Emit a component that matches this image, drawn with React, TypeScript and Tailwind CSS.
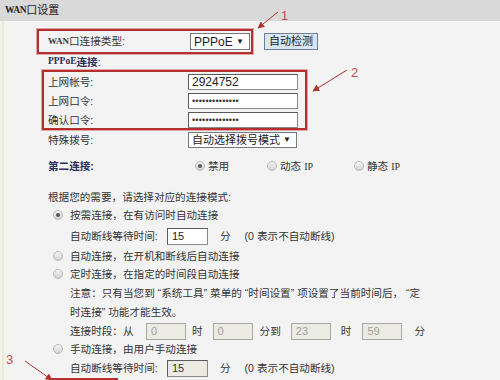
import React from "react";

const RED = "#b3302f";

function Radio({ checked }: { checked?: boolean }) {
  return (
    <span className="inline-flex w-[10px] h-[10px] shrink-0 rounded-full border border-[#b8b8b8] bg-linear-to-b from-[#f6f6f6] to-[#d2d2d2] items-center justify-center">
      {checked && <span className="w-[4px] h-[4px] rounded-full bg-[#555]" />}
    </span>
  );
}

function TextBox({ children, dots }: { children?: React.ReactNode; dots?: boolean }) {
  return (
    <div className="w-[110px] h-[16px] bg-white border border-[#8a8a8a] border-t-[#5a5a5a] border-l-[#5a5a5a] pl-[3px] flex items-center font-['Liberation_Sans',sans-serif] text-[12px] text-[#222] leading-none">
      {dots ? <span className="text-[9px] tracking-[0.2px] text-[#333]">••••••••••••••</span> : children}
    </div>
  );
}

function SmallBox({ value, disabled }: { value: string; disabled?: boolean }) {
  return (
    <div
      className={
        disabled
          ? "w-[40px] h-[17px] bg-[#ebebe4] border border-[#a8a8a8] pl-[4px] flex items-center font-['Liberation_Sans',sans-serif] text-[11px] text-[#a0a0a0] leading-none"
          : "w-[41px] h-[17px] bg-white border border-[#8a8a8a] border-t-[#5a5a5a] border-l-[#5a5a5a] pl-[4px] flex items-center font-['Liberation_Sans',sans-serif] text-[11px] text-[#222] leading-none"
      }
    >
      {value}
    </div>
  );
}

export default function App() {
  return (
    <div className="relative w-[500px] h-[380px] overflow-hidden bg-[#f3f3f3] font-['Liberation_Sans','Noto_Sans_CJK_SC',sans-serif] text-[10.6px] text-[#333] leading-none">
      {/* header */}
      <div className="h-[21px] bg-[#d9d9d9] flex items-center pl-[5px] text-[11px] text-[#222]">
        <span className="font-['Liberation_Serif',serif] font-bold text-[9.5px] tracking-[-0.3px]">WAN</span>
        <span>口设置</span>
      </div>

      {/* content */}
      <div className="ml-[2px] border-l-2 border-[#f1e7c9] h-[359px] pt-[8px]">
        {/* row 1 */}
        <div className="flex items-center">
          <div className="ml-[33px] w-[216px] h-[25px] border-2 border-[#b3302f] shadow-[0_0_0_1px_#e2a4a4] flex items-center pl-[9px]">
            <div className="w-[142px] flex items-center">
              <span className="font-['Liberation_Serif',serif] font-bold text-[9px]">WAN</span>
              <span>口连接类型:</span>
            </div>
            <div className="w-[60px] h-[17px] bg-white border border-[#7a7a7a] flex items-center justify-between pl-[3px] pr-[5px] font-['Liberation_Sans',sans-serif] text-[12px] text-[#222]">
              <span>PPPoE</span>
              <span className="text-[8px]">▼</span>
            </div>
          </div>
          <div className="ml-[11px] w-[54px] h-[17px] bg-[#d8e5f3] border border-[#6f7f99] flex items-center justify-center text-[11px] text-[#222]">
            自动检测
          </div>
        </div>

        {/* PPPoE连接 */}
        <div className="h-[16px] pl-[44px] flex items-center text-[#2c2c5e] font-bold">
          <span className="font-['Liberation_Serif',serif] text-[9.5px]">PPPoE</span>
          <span>连接</span>
          <span className="font-normal">:</span>
        </div>

        {/* box 2 */}
        <div className="ml-[38px] w-[265px] border-2 border-[#b3302f] shadow-[0_0_0_1px_#e2a4a4] pl-[4px] pt-[2px] flex flex-col gap-[3px]">
          <div className="h-[16px] flex items-center">
            <div className="w-[140px]">上网帐号:</div>
            <TextBox>2924752</TextBox>
          </div>
          <div className="h-[16px] flex items-center">
            <div className="w-[140px]">上网口令:</div>
            <TextBox dots />
          </div>
          <div className="h-[16px] flex items-center">
            <div className="w-[140px]">确认口令:</div>
            <TextBox dots />
          </div>
        </div>

        {/* 特殊拨号 */}
        <div className="mt-[2px] h-[16px] pl-[44px] flex items-center">
          <div className="w-[140px]">特殊拨号:</div>
          <div className="w-[109px] h-[16px] bg-white border border-[#7a7a7a] flex items-center justify-between pl-[3px] pr-[5px] text-[11px] text-[#222]">
            <span>自动选择拨号模式</span>
            <span className="text-[8px]">▼</span>
          </div>
        </div>

        {/* 第二连接 */}
        <div className="mt-[8px] h-[20px] pl-[44px] flex items-center">
          <div className="w-[147px] text-[#2c2c5e] font-bold">第二连接:</div>
          <div className="w-[72px] flex items-center">
            <Radio checked />
            <span className="ml-[3px]">禁用</span>
          </div>
          <div className="w-[87px] flex items-center">
            <Radio />
            <span className="ml-[3px]">动态 <span className="font-['Liberation_Serif',serif] text-[10px]">IP</span></span>
          </div>
          <div className="flex items-center">
            <Radio />
            <span className="ml-[3px]">静态 <span className="font-['Liberation_Serif',serif] text-[10px]">IP</span></span>
          </div>
        </div>

        {/* modes */}
        <div className="mt-[12px] h-[18px] pl-[44px] flex items-center">根据您的需要，请选择对应的连接模式:</div>

        <div className="h-[18px] pl-[49px] flex items-center">
          <Radio checked />
          <span className="ml-[7px]">按需连接，在有访问时自动连接</span>
        </div>
        <div className="mt-[2px] h-[20px] pl-[66px] flex items-center">
          <div className="w-[97px]">自动断线等待时间:</div>
          <SmallBox value="15" />
          <span className="ml-[12px]">分</span>
          <span className="ml-[14px]">(0 表示不自动断线)</span>
        </div>
        <div className="mt-[1px] h-[18px] pl-[49px] flex items-center">
          <Radio />
          <span className="ml-[7px]">自动连接，在开机和断线后自动连接</span>
        </div>
        <div className="h-[18px] pl-[49px] flex items-center">
          <Radio />
          <span className="ml-[7px]">定时连接，在指定的时间段自动连接</span>
        </div>
        <div className="mt-[1px] pl-[66px] leading-[19px]">
          <div>注意：只有当您到 “系统工具” 菜单的 “时间设置” 项设置了当前时间后， “定</div>
          <div>时连接” 功能才能生效。</div>
        </div>
        <div className="h-[19px] pl-[66px] flex items-center">
          <div className="w-[76px]">连接时段：从</div>
          <SmallBox value="0" disabled />
          <span className="ml-[6px]">时</span>
          <span className="ml-[10px]"><SmallBox value="0" disabled /></span>
          <span className="ml-[7px]">分到</span>
          <span className="ml-[10px]"><SmallBox value="23" disabled /></span>
          <span className="ml-[10px]">时</span>
          <span className="ml-[11px]"><SmallBox value="59" disabled /></span>
          <span className="ml-[12px]">分</span>
        </div>
        <div className="h-[16px] pl-[49px] flex items-center">
          <Radio />
          <span className="ml-[7px]">手动连接，由用户手动连接</span>
        </div>
        <div className="mt-[2px] h-[19px] pl-[66px] flex items-center">
          <div className="w-[97px]">自动断线等待时间:</div>
          <div className="w-[41px] h-[17px] bg-[#ebebe4] border border-[#8a8a8a] border-t-[#5a5a5a] border-l-[#5a5a5a] pl-[4px] flex items-center font-['Liberation_Sans',sans-serif] text-[11px] text-[#333]">15</div>
          <span className="ml-[12px]">分</span>
          <span className="ml-[14px]">(0 表示不自动断线)</span>
        </div>
        <div className="ml-[46px] w-[68px] h-[10px] border-2 border-[#b3302f]" />
      </div>

      {/* annotations */}
      <svg className="absolute left-0 top-0 pointer-events-none" width="500" height="380" viewBox="0 0 500 380">
        <defs>
          <marker id="ah" viewBox="0 0 10 10" refX="9" refY="5" markerWidth="7" markerHeight="7" orient="auto">
            <path d="M0 0 L10 5 L0 10 z" fill={RED} />
          </marker>
        </defs>
        <line x1="278" y1="12" x2="258" y2="28" stroke={RED} strokeWidth="1" markerEnd="url(#ah)" />
        <line x1="347" y1="70" x2="313" y2="91" stroke={RED} strokeWidth="1" markerEnd="url(#ah)" />
        <line x1="25" y1="361" x2="52" y2="380" stroke={RED} strokeWidth="1" markerEnd="url(#ah)" />
        <text x="281" y="20" fill="#c25050" fontSize="13" fontFamily="Liberation Sans, sans-serif">1</text>
        <text x="351" y="77" fill="#c25050" fontSize="13" fontFamily="Liberation Sans, sans-serif">2</text>
        <text x="6" y="364" fill="#c25050" fontSize="13" fontFamily="Liberation Sans, sans-serif">3</text>
      </svg>
    </div>
  );
}
